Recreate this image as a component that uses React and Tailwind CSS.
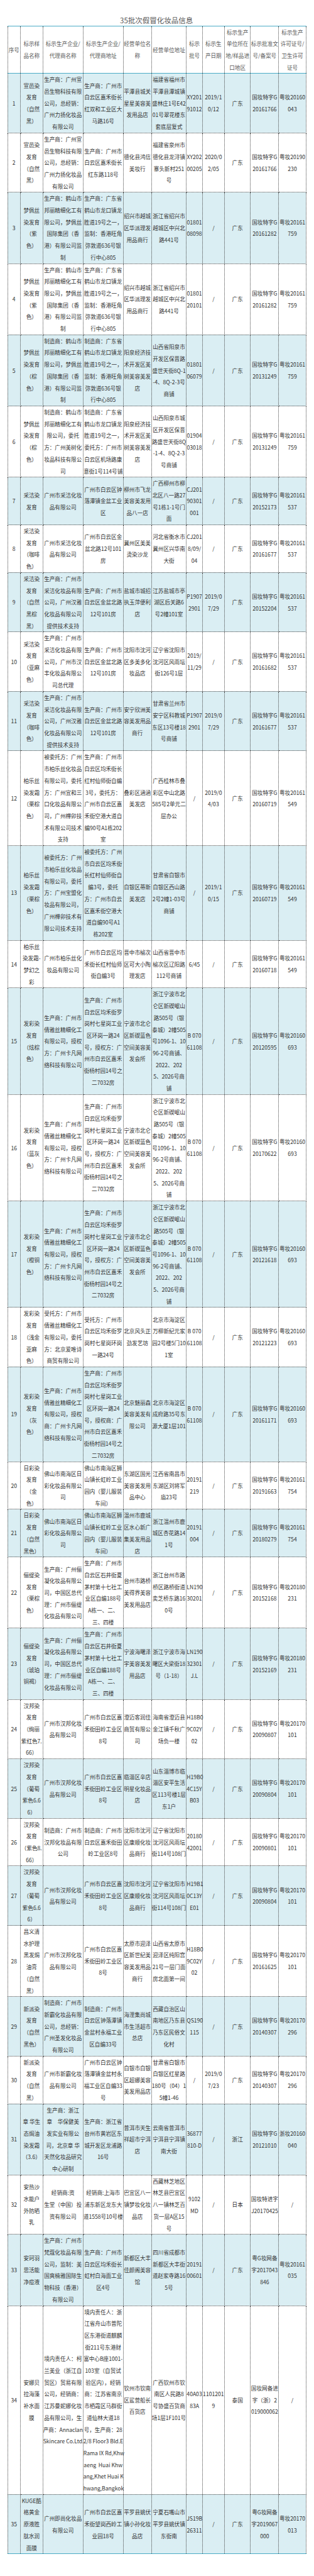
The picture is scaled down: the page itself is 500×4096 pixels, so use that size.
import React from 'react';

// 35批次假冒化妆品信息 table, lines split with "|"
const XUANYI = '生产商：广州宣|邑生物科技有限|公司，总经销：|广州力扬化妆品|有限公司';
const MENG_C3 = '生产商：鹤山市|邦丽精细化工有|限公司，梦佩丝|国际集团（香|港）有限公司监|制';
const MENG_C4 = '生产商：广东省|鹤山市龙口镇龙|胜道19号之一，|监制：香港旺角|弥敦道636号银|行中心805';
const MENG_C5 = '绍兴市越城|区华派理发|用品商行';
const MENG_C6 = '浙江省绍兴市|越城区中兴北|路441号';
const CJ_C3 = '生产商：广州市|采洁化妆品有限|公司，广州汉雅|化妆品有限公司|提供技术支持';
const JP_C4 = '生产商：广州市|白云区金盆北路|12号101房';
const FC_C3 = '生产商：广州市|倩雅丝精细化工|有限公司，授权|方：广州卡凡网|络科技有限公司';
const FC_C4 = '生产商：广州市|白云区均禾街罗|岗村七星岗工业|区环岗一路24|号，授权方：广|州市白云区嘉禾|街杨村园14号之|二7032房';
const FC_C5 = '宁波市北仑|区新碶蓝色|空间美容美|发会所';
const FC_C6 = '浙江宁波市北|仑区新碶岷山|路505号（银|泰城）2幢505|号1096-1、10|96-2号商铺、|2022、202|5、2026号商|铺';
const RC_C3 = '佛山市南海区日|彩化妆品有限公|司';
const RC_C4 = '佛山市南海区狮|山镇长虹岭工业|园内（婴儿服装|车间）';
const LT_C3 = '生产商：广州俪|凝化妆品有限公|司，中国区总代|理：广州市俪缇|化妆品有限公司';
const LT_C4 = '生产商：广州市|白云区石井街夏|茅村第十七社工|业区自编188号|A栋一、二、|三、四楼';
const HB_C3 = '广州市汉邦化妆|品有限公司';
const HB_C4 = '广州市白云区嘉|禾街田岭工业区|8号';
const SY_C5 = '沈阳市沈河|区康顺化妆|品商行';
const SY_C6 = '辽宁省沈阳市|沈河区风雨坛|街114号108门';

const header = [
  '序号', '标示样|品名称', '标示生产企业/|代理商名称', '标示生产企业/|代理商地址', '经营单位名|称',
  '经营单位地址', '标示|批号', '标示生|产日期', '标示生产|单位所在|地/样品进|口地区', '标示批准文|号/备案号',
  '标示生产|许可证号/|卫生许可|证号',
];

const rows = [
  ['1', '宣邑染|发育|（自然|黑）', XUANYI, '生产商：广州市|白云区嘉禾街长|红双和工业区大|马路16号', '平潭县城关|星星美容美|发用品店', '福建省福州市|平潭县潭城镇|盛林庄1号E42|01号翠花楼东|套底层复式', 'XY201|91012', '2019/1|0/12', '广东', '国妆特字G|20161766', '粤妆20160|043'],
  ['2', '宣邑染|发育|（自然|黑）', XUANYI, '生产商：广州市|白云区嘉禾街长|红东路118号', '德化县鸿信|美妆行', '福建省泉州市|德化县龙浔镇|寨头新村251|号', 'XY202|00205', '2020/0|2/05', '广东', '国妆特字G|20161766', '粤妆20190|230'],
  ['3', '梦佩丝|染发育|（紫|色）', MENG_C3, MENG_C4, MENG_C5, MENG_C6, '01801|08098', '/', '广东', '国妆特字G|20161282', '粤妆20161|759'],
  ['4', '梦佩丝|染发育|（紫|色）', MENG_C3, MENG_C4, MENG_C5, MENG_C6, '01801|20101', '/', '广东', '国妆特字G|20161282', '粤妆20161|759'],
  ['5', '梦佩丝|染发育|（棕|色）', '制造商：鹤山市|邦丽精细化工有|限公司，梦佩丝|国际集团（香|港）有限公司监|制', '制造商：广东省|鹤山市龙口镇龙|胜道19号之一，|监制：香港旺角|弥敦道636号银|行中心805', '阳泉经济技|术开发区美|树美容美发|店', '山西省阳泉市|开发区保晋路|盛世天街8Q-1|-4、8Q-2-3号|商铺', '01801|06079', '/', '广东', '国妆特字G|20131249', '粤妆20161|759'],
  ['6', '梦佩丝|染发育|（棕|色）', '制造商：鹤山市|邦丽精细化工有|限公司，委托|方：广州美树化|妆品科技有限公|司', '制造商：广东省|鹤山市龙口镇龙|胜道19号之一，|委托方：广州市|白云区机场路康|意街1号114号铺', '阳泉经济技|术开发区美|树美容美发|店', '山西阳泉市城|区开发区保晋|路盛世天街8Q|-1-4、8Q-2-3|号商铺', '01904|03018', '/', '广东', '国妆特字G|20131249', '粤妆20161|759'],
  ['7', '采洁染|发育', '广州市采洁化妆|品有限公司', '广州市白云区钟|落潭镇金盆工业|区', '柳州市飞龙|美容美发用|品八一店', '广西柳州市柳|北区八一路27|号1栋1-1号门|面', 'CJ201|90301|001', '/', '广东', '国妆特字G|20152173', '粤妆20161|537'],
  ['8', '采洁染|发育|（咖啡|色）', '广州市采洁化妆|品有限公司', '广州市白云区金|盆北路12号101|房', '冀州区美美|烫染沙龙', '河北省衡水市|冀州区兴华南|大街', 'CJ201|8/09/|04', '/', '广东', '国妆特字G|20161677', '粤妆20161|537'],
  ['9', '采洁染|发育|（自然|黑棕|黑）', CJ_C3, JP_C4, '盐城市城招|执玉萍便利|店', '江苏盐城市亭|湖区后关路6|号2幢101室', 'P1907|2901', '2019/0|7/29', '广东', '国妆特字G|20152204', '粤妆20161|537'],
  ['10', '采洁染|发育|（亚麻|色）', '生产商：广州市|采洁化妆品有限|公司，广州市汉|丰化妆品有限公|司总代理', JP_C4, '沈阳市沈河|区多美多化|妆品店', '辽宁省沈阳市|沈河区风雨坛|街126号1层', '2019/|11/29', '/', '广东', '国妆特字G|20161682', '粤妆20161|537'],
  ['11', '采洁染|发育|（咖啡|色）', CJ_C3, JP_C4, '安宁欣洲美|容美发用品|商行', '甘肃省兰州市|安宁区科教城|东区13号楼18|号商铺', 'P1907|2901', '2019/0|7/29', '广东', '国妆特字G|20161677', '粤妆20161|537'],
  ['12', '柏乐丝|染发霜|（栗棕|色）', '被委托方：广州|市柏乐丝化妆品|有限公司，委托|方：广州宜和三|口化妆品有限公|司，广州樺卯技|术有限公司技术|支持', '生产商：广州市|白云区均禾街长|红村仙师街自编|3号，委托方：|广州市白云区嘉|禾街空港大道自|编90号A1栋202|室', '叠彩区涵涵|美发店', '广西桂林市叠|彩区中山北路|585号2单元二|层办公', '/', '2019/0|4/03', '广东', '国妆特字G|20160719', '粤妆20161|549'],
  ['13', '柏乐丝|染发霜|（栗棕|色）', '被委托方：广州|市柏乐丝化妆品|有限公司，委托|方：广州宝盟化|妆品有限公司，|广州樺卯技术有|限公司技术支持', '被委托方：广州|市白云区均禾街|长红村仙师街自|编3号，委托|方：广州市白云|区嘉禾街空港大|道自编90号A1|栋202室', '白银区蒂斯|美发店', '甘肃省白银市|白银区西山路|2号2幢1-03号|商铺', '/', '2019/1|0/15', '广东', '国妆特字G|20160719', '粤妆20161|549'],
  ['14', '柏乐丝|染发霜-|梦幻之|彩', '广州市柏乐丝化|妆品有限公司', '广州市白云区均|禾街长红村仙师|街自编3号', '晋中市榆次|区可大小陶|理发店', '山西省晋中市|榆次区辽阳路|112号商铺', '6/45', '/', '广东', '国妆特字G|20160718', '粤妆20161|549'],
  ['15', '发彩染|发育|（炫棕|色）', FC_C3, FC_C4, FC_C5, FC_C6, 'B 070|61108', '/', '广东', '国妆特字G|20120595', '粤妆20160|693'],
  ['16', '发彩染|发育|（蓝灰|色）', FC_C3, FC_C4, FC_C5, FC_C6, 'B 070|61108', '/', '广东', '国妆特字G|20170622', '粤妆20160|693'],
  ['17', '发彩染|发育|（橙铜|色）', FC_C3, FC_C4, FC_C5, FC_C6, 'B 070|61108', '/', '广东', '国妆特字G|20121618', '粤妆20160|693'],
  ['18', '发彩染|发育|（浅金|亚麻|色）', '受托方：广州市|倩雅丝精细化工|有限公司，委托|方：北京爱唯诗|商贸有限公司', '受托方：广州市|白云区均禾街罗|岗村七星岗环岗|一路24号', '北京风头正|劲发艺坊', '北京市海淀区|万柳新纪元家|园2号楼5门10|1室', 'B 070|61108', '/', '广东', '国妆特字G|20121223', '粤妆20160|693'],
  ['19', '发彩染|发育|（灰|色）', '生产商：广州市|倩雅丝精细化工|有限公司，授权|商：广州卡凡网|络科技有限公司', '生产商：广州市|白云区均禾街罗|岗村七星岗工业|区环岗一路24|号，授权商：广|州市白云区嘉禾|街杨村园14号之|二7032房', '北京魅丽森|美容美发有|限公司', '北京市海淀区|成府路35号东|源大厦1层101', 'B 070|61108', '/', '广东', '国妆特字G|20161171', '粤妆20160|693'],
  ['20', '日彩染|发育|（金|色）', RC_C3, RC_C4, '东湖区国光|美容美发用|品中心', '江西省南昌市|东湖区刘将军|庙23号', '20191|219', '/', '广东', '国妆特字G|20191663', '粤妆20161|754'],
  ['21', '日彩染|发育|（自然|黑色）', RC_C3, RC_C4, '温州市鹿城|区水心新广|集美发用品|店', '浙江温州市鹿|城区杏花路14|1号', '20191|004', '/', '广东', '国妆特字G|20180279', '粤妆20161|754'],
  ['22', '俪缇染|发育|（栗棕|色）', LT_C3, LT_C4, '台州市路桥|美得界美容|美发用品店', '浙江台州市路|桥区路桥街道|卖芝桥东路16|0号', 'LN190|30201', '/', '广东', '国妆特字G|20152168', '粤妆20180|231'],
  ['23', '俪缇染|发育|（琥珀|铜褐）', LT_C3, LT_C4, '宁波海曙泽|宇美容美发|用品店', '浙江宁波市海|曙区大梁街18|号（1-18）', 'LN190|32301|J.L', '/', '广东', '国妆特字G|20152169', '粤妆20180|231'],
  ['24', '汉邦染|发育|（绚丽|紫红色7.|66）', HB_C3, HB_C4, '澄迈客润佳|商贸有限公|司', '海南省澄迈县|金江镇千秋广|场负一楼', 'H18B0|9C02Y|02', '/', '广东', '国妆特字G|20090807', '粤妆20170|101'],
  ['25', '汉邦染|发育|（葡萄|紫色6.6|6）', HB_C3, HB_C4, '临淄区辛店|明星化妆品|店', '山东淄博市临|淄区安平生活|区113号楼1层|东1户', 'H19B0|4C15Y|B03', '/', '广东', '国妆特字G|20090804', '粤妆20170|101'],
  ['26', '汉邦染|发育|（紫色8.|66）', '制造商：广州市|汉邦化妆品有限|公司', '制造商：广州市|白云区嘉禾街田|岭工业区8号', SY_C5, SY_C6, '20180|42001', '/', '广东', '国妆特字G|20090801', '粤妆20170|101'],
  ['27', '汉邦染|发育|（葡萄|紫色6.6|6）', HB_C3, HB_C4, SY_C5, SY_C6, 'H19B1|0C13Y|E01', '/', '广东', '国妆特字G|20090804', '粤妆20170|101'],
  ['28', '昌义清|水护理|黑发焗|油膏|（自然|黑）', HB_C3, HB_C4, '太原市迎泽|区新世纪美|容美发用品|商行', '山西省太原市|迎泽区纯阳宫|21号一层门面|房北面第一间', 'H18B0|9C02Y|02', '/', '广东', '国妆特字G|20161625', '粤妆20170|101'],
  ['29', '新派染|发育|（自然|黑色）', '制造商：广州市|新霸化妆品有限|公司，总经销：|广州圣发化妆品|有限公司', '制造商：广州市|白云区钟落潭镇|金盆村永福工业|区自编33号', '海浬集尚城|市生活超市|总店', '西藏自治区山|南地区乃东县|乃东区民俗文|化村', 'QS190|115', '/', '广东', '国妆特字G|20140307', '粤妆20170|296'],
  ['30', '新派染|发育|（自然|黑）', '广州市新霸化妆|品有限公司', '广州市白云区钟|落潭镇金盆村永|福工业区自编33|号', '白银市白银|区超娜美容|美发用品店', '甘肃省白银市|白银区红星路|180号（04）1|5幢1-46', '/', '2019/0|7/23', '广东', '国妆特字G|20140307', '粤妆20170|296'],
  ['31', '章 华生|态焗油|染发霜|（3.6）', '生产商：浙江|章　华保健美|发实业有限公|司，北京章 华|天然化妆品研究|中心研制', '生产商：浙江省|台州市黄岩区东|城开发区龙浦路|16号', '普洱市天生|祥超市宁洱|店', '云南省普洱市|宁洱县宁洱镇|南大街', '36877|810-D', '/', '浙江', '国妆特字G|20121010', '浙妆20160|040'],
  ['32', '安热沙|水能户|外防晒|乳', '经销商:资|生堂（中国）投|资有限公司', '经销商:上海市|浦东新区龙东大|道1558号10号楼', '巴宜区八一|镇梦妆化妆|品店', '西藏林芝地区|林芝县巴宜区|八一镇林芝百|货一层A区15|号', '9102|MD', '/', '日本', '国妆特进字|J20170425', '/'],
  ['33', '安珂羽|思活能|净痘液', '生产商：广州市|梵蔻化妆品有限|公司，监制：美|国爽楠雅国际生|物科技（香港）|有限公司', '生产商：广州市|白云区均禾街长|虹村白海面工业|区4号', '新都区大丰|佳颜阁美容|馆', '四川省成都市|新都区大丰街|道赵家寺路16|5号', '20191|00601', '/', '广东', '粤G妆网备|字2017043|846', '粤妆20161|035'],
  ['34', '安娜贝|拉海藻|补水面|膜', '境内责任人：柯|兰美业（浙江自|贸区）贸易有限|公司，经销商：|江苏曼妮娜化妆|品有限公司，生|产商：Annaclan|Skincare Co.Ltd.', '境内责任人：浙|江省舟山市普陀|区东港街道麒麟|街211号东港财|富中心B座1001-|103室（自贸试|验区内），经销|商：江苏省南京|市栖霞区马群街|道仙林大道18|号，生产商：28|2/8 Floor3 Bld.E|Rama IX Rd,Khw|aeng  Huai Khw|ang,Khet Huai K|hwang,Bangkok', '钦州市钦南|区鲨营船长|百货店', '广西钦州市钦|南区人民路8|号协盛百货商|场1层1F101号', '40A03|83A', '1101201|9', '泰国', '国妆网备进|字（浙）2|019000062', '/'],
  ['35', 'KUGE酷|格黄金|原液胜|肽水润|面膜', '广州即尚化妆品|有限公司', '广州市白云区嘉|禾街望岗西岭工|业园18号', '平罗县姚伏|镇小孙化妆|品店', '宁夏石嘴山市|平罗县姚伏镇|东街南', 'JS19B|26311', '/', '广东', '粤G妆网备|字2019067|000', '粤妆20170|013'],
];

const Lines = ({ text }) =>
  text.split('|').map((l, i) => (
    <React.Fragment key={i}>
      {i > 0 && <br />}
      {l}
    </React.Fragment>
  ));

export default function App() {
  return (
    <div className="w-[500px] bg-white font-['Noto_Sans_CJK_SC','Noto_Sans',sans-serif]">
      {/* title */}
      <div className="ml-[11.6px] w-[475.2px] pt-[22.5px] text-center text-[11.5px] leading-[18px] text-[#595959]">
        35批次假冒化妆品信息
      </div>

      <table className="ml-[11.6px] w-[475.2px] table-fixed border-collapse text-[8.6px] leading-[18.71px] text-[#333]">
        <colgroup>
          <col className="w-[20.3px]" />
          <col className="w-[35.8px]" />
          <col className="w-[64.1px]" />
          <col className="w-[63.9px]" />
          <col className="w-[45.1px]" />
          <col className="w-[55.5px]" />
          <col className="w-[25.5px]" />
          <col className="w-[35.1px]" />
          <col className="w-[41.6px]" />
          <col className="w-[44.8px]" />
          <col className="w-[43.5px]" />
        </colgroup>
        <thead>
          <tr className="border-y border-[#4bacc6] bg-white">
            {header.map((h, i) => (
              <th
                key={i}
                className="border border-dotted border-[#444] p-0 text-center align-middle font-normal whitespace-pre text-[#595959]"
              >
                <Lines text={h} />
              </th>
            ))}
          </tr>
        </thead>
        <tbody>
          {rows.map((r, ri) => (
            <tr
              key={ri}
              className={
                (ri % 2 === 0 ? 'bg-[#daeef3]' : 'bg-white') +
                (ri === rows.length - 1 ? ' border-b border-[#4bacc6]' : '')
              }
            >
              {r.map((c, ci) => (
                <td
                  key={ci}
                  className="border border-dotted border-[#444] p-0 text-center align-middle whitespace-pre"
                >
                  <Lines text={c} />
                </td>
              ))}
            </tr>
          ))}
        </tbody>
      </table>
    </div>
  );
}
